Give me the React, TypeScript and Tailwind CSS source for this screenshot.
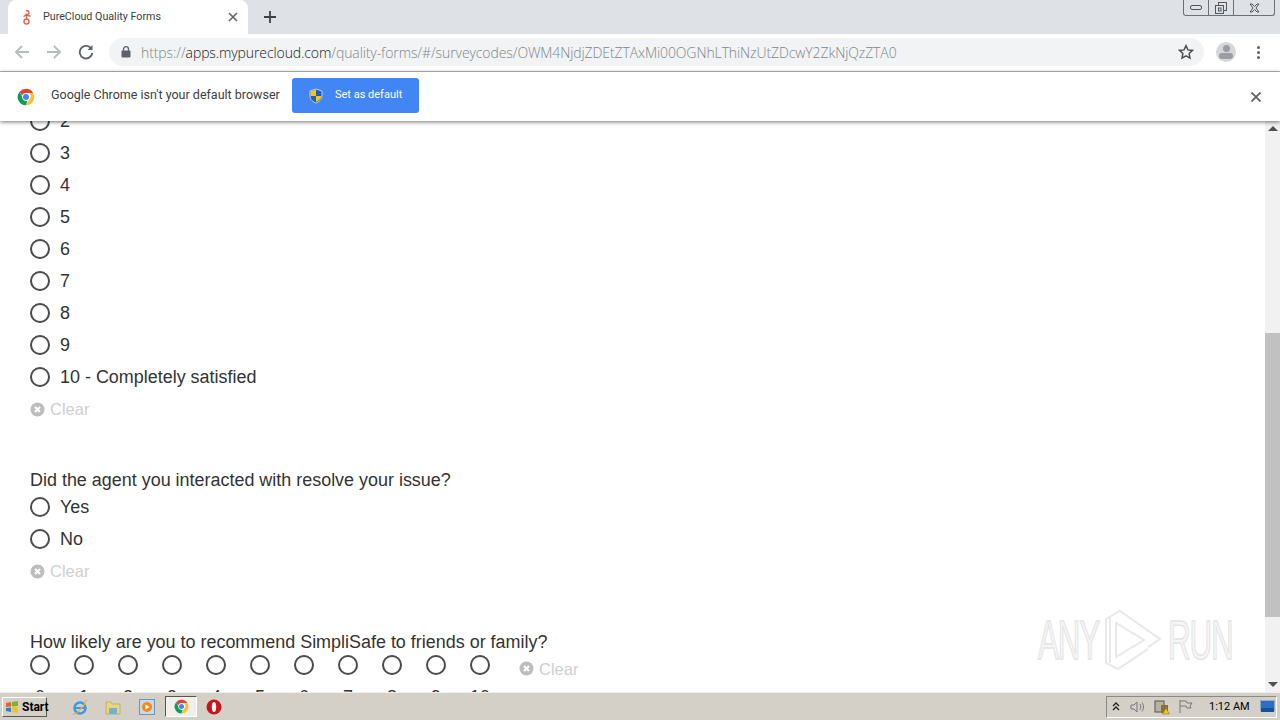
const scaleRows = ["2", "3", "4", "5", "6", "7", "8", "9", "10 - Completely satisfied"];
const npsRows = ["0", "1", "2", "3", "4", "5", "6", "7", "8", "9", "10"];
const uiFont = "font-['Roboto',sans-serif]";
const formFont = "font-['Liberation_Sans',Arial,sans-serif]";

const Radio = () => (
  <span className="block h-5 w-5 shrink-0 rounded-full border-2 border-[#4a4a4f]"></span>
);

const RadioRow = ({ label }: { label: string }) => (
  <div className="flex h-8 items-center gap-2.5">
    <Radio />
    <span className="text-[17.95px] text-[#333]">{label}</span>
  </div>
);

const ClearIcon = () => (
  <svg width="15" height="15" viewBox="0 0 15 15" className="shrink-0">
    <circle cx="7.5" cy="7.5" r="7" fill="#bdbdbd" />
    <path d="M5 5l5 5M10 5l-5 5" stroke="#fff" strokeWidth="2.2" />
  </svg>
);

const Clear = () => (
  <div className="flex items-center gap-[5px] text-[16.5px] font-light text-[#cfcfcf]">
    <ClearIcon />
    <span className="mt-[1px]">Clear</span>
  </div>
);

const ChromeLogo = ({ size }: { size: number }) => (
  <svg width={size} height={size} viewBox="0 0 24 24">
    <path d="M12 1a11 11 0 0 1 9.53 5.5H12a5.5 5.5 0 0 0-5.2 3.7L3.4 5A11 11 0 0 1 12 1z" fill="#db4437" />
    <path d="M21.53 6.5A11 11 0 0 1 12 23l4.76-8.25A5.5 5.5 0 0 0 16 6.5z" fill="#fbc02d" />
    <path d="M12 23A11 11 0 0 1 3.4 5l4.8 8.9a5.5 5.5 0 0 0 5.6 3.3z" fill="#0f9d58" />
    <circle cx="12" cy="12" r="5" fill="#fff" />
    <circle cx="12" cy="12" r="4" fill="#4285f4" />
  </svg>
);

const Shield = ({ size }: { size: number }) => (
  <svg width={size} height={size} viewBox="0 0 16 16">
    <path d="M8 1l6 2v5c0 3.500-3 6-6 7-3-1-6-3.500-6-7V3z" fill="#1f5fb4" stroke="#dfe6ee" strokeWidth="0.8" />
    <path d="M8 1.500V8H2.500V3.400zM8 8h5.500c-.3 3-2.900 5-5.500 6z" fill="#f5c518" />
  </svg>
);

const TabStrip = () => (
  <div className="relative flex h-[34px] shrink-0 items-end bg-[#dee1e6] pl-2">
    <div className="flex h-[34px] w-[240px] items-center rounded-t-lg bg-white pl-[14px] pr-[10px]">
      <svg width="12" height="16" viewBox="0 0 12 16" fill="none" stroke="#d9674f" strokeWidth="1.400" className="ml-[-1px]">
        <circle cx="5.500" cy="12.500" r="2.500" />
        <path d="M2.500 7.500c2-1.500 5-1.500 7 0M5.500 7v3M5 1.500c2 0 3 1 3 2.200S6.500 6 4.500 5" />
      </svg>
      <span className={`ml-[10px] mt-[1px] flex-1 text-[10.7px] text-[#3c4043] ${uiFont}`}>PureCloud Quality Forms</span>
      <svg width="10" height="10" viewBox="0 0 10 10" stroke="#5f6368" strokeWidth="1.600" className="ml-[-1px]">
        <path d="M1 1l8 8M9 1l-8 8" />
      </svg>
    </div>
    <svg width="12" height="12" viewBox="0 0 12 12" stroke="#3c4043" strokeWidth="1.800" className="mb-[11px] ml-4">
      <path d="M6 0v12M0 6h12" />
    </svg>
    <div className="absolute right-[5px] top-0 flex h-4 w-[92px] rounded-b-[3px] border border-t-0 border-[#6b7078] text-[#555]">
      <div className="flex w-[25px] items-center justify-center border-r border-[#6b7078]">
        <span className="block h-[5px] w-3 rounded-[2px] border border-[#555]"></span>
      </div>
      <div className="flex w-[25px] items-center justify-center border-r border-[#6b7078]">
        <svg width="12" height="12" viewBox="0 0 12 12" fill="none" stroke="#555">
          <rect x="3.500" y="0.500" width="8" height="8" />
          <rect x="0.500" y="3.500" width="8" height="8" fill="#dee1e6" />
          <rect x="3.500" y="6" width="2.500" height="3" />
        </svg>
      </div>
      <div className="flex flex-1 items-center justify-center">
        <svg width="11" height="10" viewBox="0 0 11 10" fill="none" stroke="#555">
          <path d="M1 1h2l2.500 2.500L8 1h2L7 5l3 4H8L5.500 6.500 3 9H1l3-4z" />
        </svg>
      </div>
    </div>
  </div>
);

const Toolbar = () => (
  <div className="flex h-[38px] shrink-0 items-center border-b border-[#b8b8b8] bg-white pb-[1px] pl-[14px]">
    <svg width="16" height="16" viewBox="0 0 16 16" fill="none" stroke="#b7babf" strokeWidth="1.800">
      <path d="M15 8H2M8 2L2 8l6 6" />
    </svg>
    <svg width="16" height="16" viewBox="0 0 16 16" fill="none" stroke="#b7babf" strokeWidth="1.800" className="ml-4">
      <path d="M1 8h13M8 2l6 6-6 6" />
    </svg>
    <svg width="16" height="16" viewBox="0 0 16 16" fill="none" stroke="#5f6368" strokeWidth="1.900" className="ml-4">
      <path d="M13.500 5A6.300 6.300 0 1 0 14.300 9" />
      <path d="M14.500 1v5h-5z" fill="#5f6368" stroke="none" />
    </svg>
    <div className="ml-[15px] flex h-7 w-[1095px] items-center rounded-full bg-[#f1f3f4] pl-3 pr-[10px]">
      <svg width="10" height="12" viewBox="0 0 10 12" className="shrink-0">
        <rect x="0.500" y="4.500" width="9" height="7" rx="1" fill="#5f6368" />
        <path d="M2.500 5V3.200a2.500 2.500 0 0 1 5 0V5" fill="none" stroke="#5f6368" strokeWidth="1.300" />
      </svg>
      <span className="ml-[10px] flex-1 whitespace-nowrap font-['Open_Sans',sans-serif] text-[14px] font-light tracking-[-0.1px] text-[#80868b]">
        https://<span className="text-[#202124]">apps.mypurecloud.com</span>/quality-forms/#/surveycodes/OWM4NjdjZDEtZTAxMi00OGNhLThiNzUtZDcwY2ZkNjQzZTA0
      </span>
      <svg width="16" height="16" viewBox="0 0 24 24" fill="none" stroke="#4a4d52" strokeWidth="2.200" className="shrink-0">
        <path d="M12 2.500l2.900 6.300 6.800.8-5 4.700 1.300 6.800-6-3.400-6 3.400 1.300-6.800-5-4.700 6.800-.8z" />
      </svg>
    </div>
    <div className="relative ml-3 h-5 w-5 overflow-hidden rounded-full bg-[#d5d6d8]">
      <span className="absolute left-[6.500px] top-[3px] h-[7px] w-[7px] rounded-full bg-[#9a9da1]"></span>
      <span className="absolute left-[3px] top-[11px] h-[6px] w-[14px] rounded-full bg-[#9a9da1]"></span>
    </div>
    <div className="ml-[21px] flex flex-col gap-[2px]">
      <span className="block h-[3px] w-[3px] rounded-full bg-[#5f6368]"></span>
      <span className="block h-[3px] w-[3px] rounded-full bg-[#5f6368]"></span>
      <span className="block h-[3px] w-[3px] rounded-full bg-[#5f6368]"></span>
    </div>
  </div>
);

const Infobar = () => (
  <div className={`relative z-10 flex h-[49px] shrink-0 items-center bg-white pb-[2px] pl-[17px] pr-[19px] shadow-[0_1px_4px_rgba(0,0,0,0.55)] ${uiFont}`}>
    <span className="mt-[2px]"><ChromeLogo size={18} /></span>
    <span className="ml-4 w-[228px] whitespace-nowrap text-[12.5px] text-[#3c4043]">Google Chrome isn't your default browser</span>
    <div className="ml-[13px] flex h-[35px] w-[127px] items-center rounded-[3px] bg-[#4285f4] pl-4 text-[11px] text-white">
      <Shield size={16} />
      <span className="ml-[11px]">Set as default</span>
    </div>
    <svg width="10" height="10" viewBox="0 0 10 10" stroke="#5f6368" strokeWidth="1.800" className="ml-auto mt-[2px]">
      <path d="M0.500 0.500l9 9M9.500 0.500l-9 9" />
    </svg>
  </div>
);

const Scrollbar = () => (
  <div className="flex w-[15px] shrink-0 flex-col bg-[#f1f1f1]">
    <div className="flex h-[15px] items-center justify-center bg-[#f1f1f1]">
      <span className="block h-0 w-0 border-x-[5px] border-b-[5px] border-x-transparent border-b-[#505050]"></span>
    </div>
    <div className="flex-1 pt-[197px]">
      <div className="h-[284px] bg-[#c1c1c1]"></div>
    </div>
    <div className="flex h-[15px] items-center justify-center">
      <span className="block h-0 w-0 border-x-[5px] border-t-[5px] border-x-transparent border-t-[#505050]"></span>
    </div>
  </div>
);

const Watermark = () => (
  <div className="pointer-events-none absolute bottom-[21px] right-[48px] flex items-center font-['Liberation_Sans',sans-serif] text-[55px] leading-none tracking-[-2px] text-[#f6f6f6] [-webkit-text-stroke:1.500px_#e4e4e4]">
    <span className="inline-block w-[62px] origin-left scale-x-[0.57] whitespace-nowrap">ANY</span>
    <svg width="60" height="62" viewBox="0 0 60 62" fill="none" stroke="#e8e8e8" strokeWidth="2" className="mx-[2px]">
      <path d="M14 14v34l28-17zM8 8v46M4 10l14-8 40 28-12 8M4 10v44l12 6 30-20" />
    </svg>
    <span className="ml-[4px] inline-block w-[64px] origin-left scale-x-[0.57] whitespace-nowrap">RUN</span>
  </div>
);

const FormPane = () => (
  <div className={`relative flex flex-1 overflow-hidden bg-white ${formFont}`}>
    <div className="flex-1 overflow-hidden pl-[30px]">
      <div className="mt-[-16px]">
        {scaleRows.map((label) => (
          <RadioRow key={label} label={label} />
        ))}
        <div className="flex h-8 items-center"><Clear /></div>
        <h3 className="mt-[44px] h-[22px] text-[17.95px] leading-[23px] text-[#333]">Did the agent you interacted with resolve your issue?</h3>
        <RadioRow label="Yes" />
        <RadioRow label="No" />
        <div className="flex h-8 items-center"><Clear /></div>
        <h3 className="mt-[44px] h-[23px] text-[17.95px] leading-[23px] text-[#333]">How likely are you to recommend SimpliSafe to friends or family?</h3>
        <div className="mt-[1px] flex items-start">
          <div className="flex gap-6">
            {npsRows.map((n) => (
              <div key={n} className="flex w-5 flex-col items-center gap-[10px]">
                <Radio />
                <span className="h-6 text-[17.95px] leading-6 text-[#333]">{n}</span>
              </div>
            ))}
          </div>
          <div className="ml-[29px] mt-[1px]"><Clear /></div>
        </div>
      </div>
    </div>
    <Scrollbar />
    <Watermark />
  </div>
);

const Taskbar = () => (
  <div className="flex h-7 shrink-0 items-center border-t border-[#efeee9] bg-[#d4d0c8] pl-[2px] pr-[3px]">
    <div className={`mt-[1px] flex h-[20px] w-[45px] items-center gap-[3px] border border-b-[#555] border-l-white border-r-[#555] border-t-white pl-[2px] text-[12px] font-bold text-black ${uiFont}`}>
      <svg width="14" height="14" viewBox="0 0 14 14" className="shrink-0">
        <path d="M1 3l5-1v4.500L1 7z" fill="#e8632a" />
        <path d="M7 2l6-1v5l-6 .5z" fill="#7cb13a" />
        <path d="M1 8l5-.5V12l-5-1z" fill="#2f7fd1" />
        <path d="M7 7.500l6-.5v6l-6-1z" fill="#f3c21c" />
      </svg>
      Start
    </div>
    <svg width="18" height="18" viewBox="0 0 18 18" className="ml-[24px]" fill="none">
      <circle cx="9" cy="10" r="5.500" stroke="#3a9be0" strokeWidth="2.500" />
      <path d="M4 10h10" stroke="#3a9be0" strokeWidth="2" />
      <path d="M2 16C5 17 14 8 15 2" stroke="#e3b23c" strokeWidth="1.300" />
    </svg>
    <svg width="16" height="16" viewBox="0 0 16 16" className="ml-[16px]">
      <path d="M1 3h5l1 2h8v10H1z" fill="#e9d57e" stroke="#a99b55" strokeWidth="0.600" />
      <rect x="4" y="9" width="8" height="6" fill="#6fb2d6" />
    </svg>
    <svg width="16" height="16" viewBox="0 0 16 16" className="ml-[18px]">
      <rect x="0.500" y="0.500" width="15" height="15" fill="#c9d9ea" stroke="#6b95bd" />
      <circle cx="8" cy="8" r="5" fill="#f08c1c" />
      <path d="M6.500 5.500v5l4-2.500z" fill="#fff" />
    </svg>
    <div className="ml-[10px] flex h-[21px] w-[32px] items-center justify-center border border-b-white border-l-[#555] border-r-white border-t-[#555] bg-[#f1efea]">
      <ChromeLogo size={15} />
    </div>
    <svg width="16" height="16" viewBox="0 0 16 16" className="ml-[9px]">
      <circle cx="8" cy="8" r="7.500" fill="#c8141c" />
      <ellipse cx="8" cy="8" rx="2.200" ry="5" fill="#f5f5f5" />
    </svg>
    <div className={`ml-auto flex h-[22px] w-[171px] items-center border border-b-white border-l-[#8a8a8a] border-r-white border-t-[#8a8a8a] pl-[5px] text-[11px] text-black ${uiFont}`}>
      <svg width="8" height="9" viewBox="0 0 8 9" fill="none" stroke="#222" strokeWidth="1.300">
        <path d="M1 4l3-3 3 3M1 8l3-3 3 3" />
      </svg>
      <svg width="16" height="14" viewBox="0 0 16 14" fill="none" stroke="#777" className="ml-[10px]">
        <path d="M1 5h3l3-3v10L4 9H1zM10 4c1 2 1 4 0 6M12 2.500c2 3 2 6 0 9" />
      </svg>
      <svg width="16" height="16" viewBox="0 0 16 16" className="ml-[8px]">
        <rect x="1" y="2" width="9" height="11" fill="#b9b39e" stroke="#555" />
        <rect x="7" y="6" width="7" height="8" fill="#8c6f3a" />
        <path d="M12 9l3.500 6h-7z" fill="#f5c518" stroke="#8a6d00" strokeWidth="0.500" />
      </svg>
      <svg width="15" height="15" viewBox="0 0 15 15" fill="none" stroke="#777" className="ml-[8px]">
        <path d="M2 1v13M2 2h6l1 2h5l-2 3 1 2H9L8 7H2" />
      </svg>
      <span className="ml-[16px] mt-[2px] whitespace-nowrap">1:12 AM</span>
      <svg width="15" height="13" viewBox="0 0 15 13" className="ml-[10px]">
        <rect x="0.500" y="0.500" width="14" height="10" fill="#2a6fc4" stroke="#93aac6" />
        <rect x="1" y="8" width="13" height="4" fill="#1d4f94" />
      </svg>
    </div>
  </div>
);

export default function App() {
  return (
    <div className="flex h-[720px] w-[1280px] flex-col overflow-hidden bg-white">
      <TabStrip />
      <Toolbar />
      <Infobar />
      <FormPane />
      <Taskbar />
    </div>
  );
}
